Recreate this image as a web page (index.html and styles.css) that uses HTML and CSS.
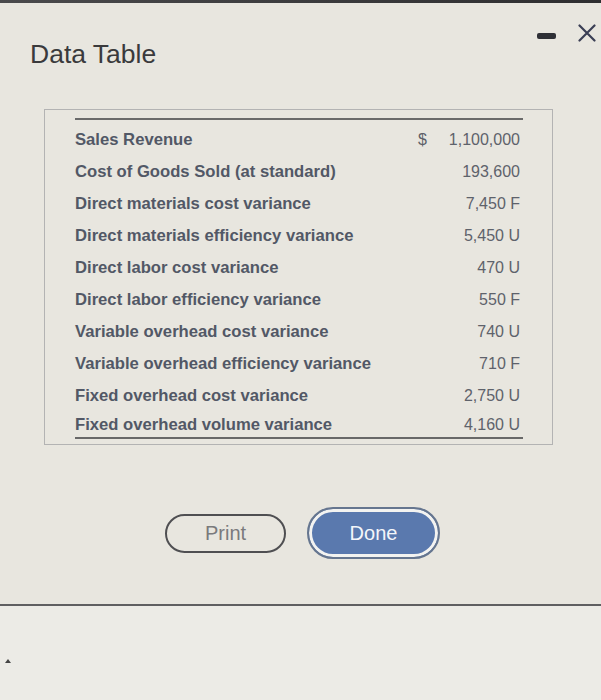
FILE: index.html
```html
<!DOCTYPE html>
<html>
<head>
<meta charset="utf-8">
<link rel="stylesheet" href="styles.css">
</head>
<body>
<div class="topbar"></div>
<div class="dialog">
  <header class="head">
    <h1 class="title">Data Table</h1>
    <div class="controls">
      <svg class="ic-min" width="19" height="6" viewBox="0 0 19 6"><rect x="0" y="0" width="19" height="6" rx="2" fill="#2f3036"/></svg>
      <svg class="ic-close" width="18" height="18" viewBox="0 0 18 18"><path d="M1.5 1.5 L16.5 16.5 M16.5 1.5 L1.5 16.5" stroke="#3b3f55" stroke-width="2.2" stroke-linecap="round" fill="none"/></svg>
    </div>
  </header>
  <div class="box">
    <table class="data">
      <tbody>
        <tr class="first"><td class="lbl">Sales Revenue</td><td class="cur">$</td><td class="amt">1,100,000</td></tr>
        <tr><td class="lbl">Cost of Goods Sold (at standard)</td><td class="cur"></td><td class="amt">193,600</td></tr>
        <tr><td class="lbl">Direct materials cost variance</td><td class="cur"></td><td class="amt">7,450 F</td></tr>
        <tr><td class="lbl">Direct materials efficiency variance</td><td class="cur"></td><td class="amt">5,450 U</td></tr>
        <tr><td class="lbl">Direct labor cost variance</td><td class="cur"></td><td class="amt">470 U</td></tr>
        <tr><td class="lbl">Direct labor efficiency variance</td><td class="cur"></td><td class="amt">550 F</td></tr>
        <tr><td class="lbl">Variable overhead cost variance</td><td class="cur"></td><td class="amt">740 U</td></tr>
        <tr><td class="lbl">Variable overhead efficiency variance</td><td class="cur"></td><td class="amt">710 F</td></tr>
        <tr><td class="lbl">Fixed overhead cost variance</td><td class="cur"></td><td class="amt">2,750 U</td></tr>
        <tr class="last"><td class="lbl">Fixed overhead volume variance</td><td class="cur"></td><td class="amt">4,160 U</td></tr>
      </tbody>
    </table>
  </div>
  <div class="actions">
    <button class="btn btn-print">Print</button>
    <button class="btn btn-done">Done</button>
  </div>
</div>
<div class="footer">
  <span class="tri"></span>
</div>
</body>
</html>
```
FILE: styles.css
```css
html, body {
  margin: 0;
  padding: 0;
}
body {
  width: 601px;
  height: 700px;
  overflow: hidden;
  background: #e8e6df;
  font-family: "Liberation Sans", Arial, sans-serif;
  display: flex;
  flex-direction: column;
}
.topbar {
  height: 3px;
  background: linear-gradient(90deg, #4a4a4c, #2e2e30);
}
.dialog {
  display: flex;
  flex-direction: column;
}
.head {
  display: flex;
  justify-content: space-between;
  align-items: flex-start;
  padding: 0 5px 0 30px;
}
.title {
  margin: 36px 0 0 0;
  font-size: 26.5px;
  line-height: 30px;
  font-weight: normal;
  color: #3a3a3c;
}
.controls {
  display: flex;
  align-items: flex-start;
  gap: 22px;
  margin-top: 21px;
}
.ic-min {
  margin-top: 9px;
  display: block;
}
.ic-close {
  display: block;
}
.box {
  margin: 40px 48px 0 44px;
  border: 1px solid #b3b3b3;
  padding: 8px 29px 5px 30px;
}
.data {
  width: 100%;
  border-collapse: collapse;
  border-top: 2px solid #6a6a6a;
}
.data td {
  padding: 0;
  vertical-align: middle;
  font-size: 16px;
  line-height: 32px;
}
.data tr.first td {
  padding-top: 4px;
}
.data tr.last td {
  line-height: 25px;
  border-bottom: 2px solid #686868;
}
.lbl {
  font-weight: bold;
  color: #525866;
}
.data td.lbl {
  font-size: 16.65px;
}
.cur {
  width: 30px;
  color: #5c6068;
}
.data td.amt {
  width: 72px;
  text-align: right;
  padding-right: 3px;
  color: #5e626b;
  white-space: nowrap;
}
.actions {
  display: flex;
  align-items: center;
  gap: 21px;
  margin: 62px 0 0 165px;
}
.btn {
  font-family: "Liberation Sans", Arial, sans-serif;
  font-size: 20px;
  border-radius: 999px;
  cursor: pointer;
}
.btn-print {
  width: 121px;
  height: 39px;
  border: 2px solid #4f4f52;
  background: transparent;
  color: #7a7a7c;
}
.btn-done {
  width: 133px;
  height: 52px;
  border: 2px solid #66768f;
  background: #5a79ae;
  box-shadow: inset 0 0 0 3px #f3f3f1;
  color: #f4f6fa;
}
.footer {
  margin-top: 45px;
  flex: 1;
  border-top: 2px solid #5f5f61;
  background: #ecebe6;
  padding: 53px 0 0 5px;
}
.tri {
  display: block;
  width: 0;
  height: 0;
  border-left: 3px solid transparent;
  border-right: 3px solid transparent;
  border-bottom: 4px solid #444;
}
```
